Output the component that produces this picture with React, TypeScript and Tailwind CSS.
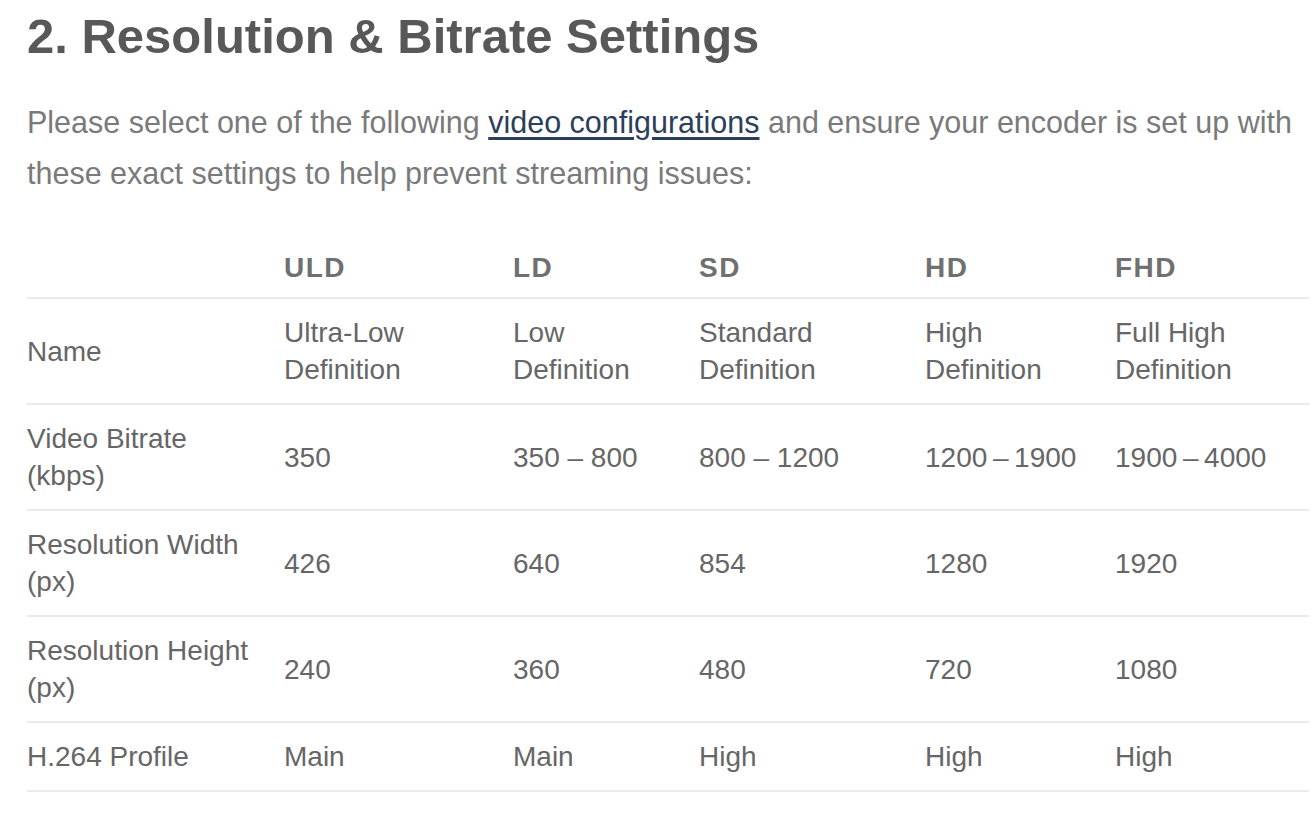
const columns = [
  { key: "ULD", width: "w-[229px]" },
  { key: "LD", width: "w-[186px]" },
  { key: "SD", width: "w-[226px]" },
  { key: "HD", width: "w-[190px]" },
  { key: "FHD", width: "w-[194px]" },
];

const rows = [
  {
    label: "Name",
    values: [
      "Ultra-Low Definition",
      "Low Definition",
      "Standard Definition",
      "High Definition",
      "Full High Definition",
    ],
  },
  {
    label: "Video Bitrate (kbps)",
    values: ["350", "350 – 800", "800 – 1200", "1200\u2009–\u20091900", "1900\u2009–\u20094000"],
  },
  {
    label: "Resolution Width (px)",
    values: ["426", "640", "854", "1280", "1920"],
  },
  {
    label: "Resolution Height (px)",
    values: ["240", "360", "480", "720", "1080"],
  },
  {
    label: "H.264 Profile",
    values: ["Main", "Main", "High", "High", "High"],
  },
];

export default function App() {
  return (
    <div className="min-h-screen bg-white pl-[27px] pr-[3px] pt-[8px] font-['Liberation_Sans',Arial,sans-serif]">
      {/* heading */}
      <h2 className="text-[49px] leading-[56px] font-bold text-[#585858]">
        2. Resolution &amp; Bitrate Settings
      </h2>

      {/* intro */}
      <p className="mt-[33px] text-[30.5px] leading-[51px] text-[#7a7a7a]">
        Please select one of the following{" "}
        <a href="#" className="text-[#2c3e5a] underline underline-offset-[4px]">
          video configurations
        </a>{" "}
        and ensure your encoder is set up with these exact settings to help
        prevent streaming issues:
      </p>

      {/* settings table */}
      <table className="mt-[35px] w-[1282px] table-fixed border-collapse text-left text-[28px] leading-[37px] text-[#666]">
        <thead>
          <tr className="border-b-2 border-[#ebebeb]">
            <th className="w-[257px] pt-[15px] pb-[11px]"></th>
            {columns.map((c) => (
              <th
                key={c.key}
                className={`${c.width} pt-[15px] pb-[11px] pr-4 font-bold tracking-[1.5px] text-[#707070]`}
              >
                {c.key}
              </th>
            ))}
          </tr>
        </thead>
        <tbody>
          {rows.map((r) => (
            <tr key={r.label} className="border-b-2 border-[#ebebeb]">
              <td className="py-[15px] pr-4 align-middle font-normal">{r.label}</td>
              {r.values.map((v, i) => (
                <td key={i} className="py-[15px] pr-4 align-middle">
                  {v}
                </td>
              ))}
            </tr>
          ))}
        </tbody>
      </table>
    </div>
  );
}
